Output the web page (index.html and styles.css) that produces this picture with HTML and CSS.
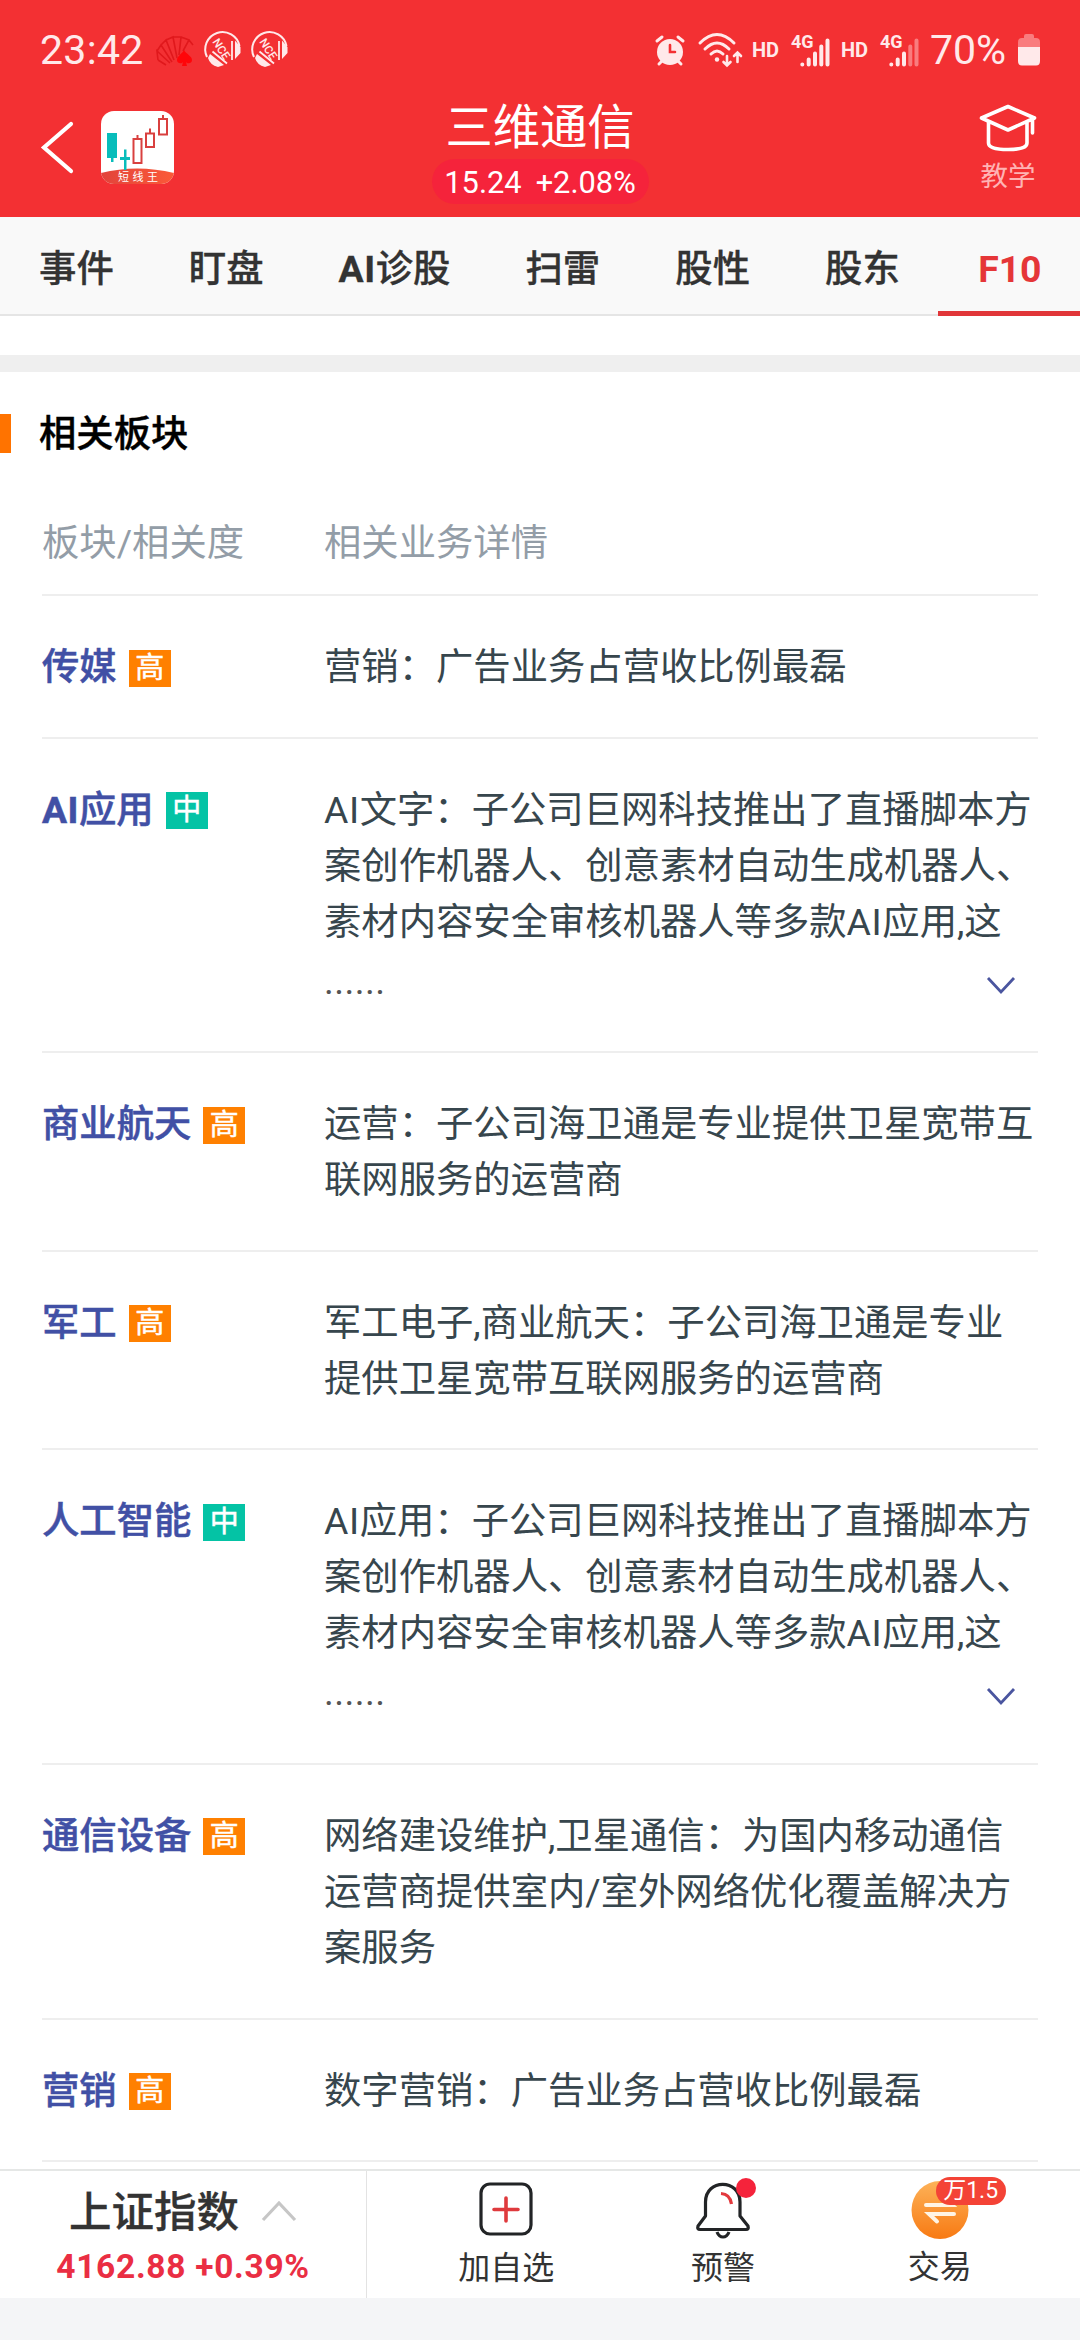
FILE: index.html
```html
<!DOCTYPE html>
<html lang="zh-CN">
<head>
<meta charset="utf-8">
<title>三维通信 F10</title>
<link rel="stylesheet" href="styles.css">
</head>
<body>
<div class="app">
  <header class="header">
    <div class="status">
      <div class="status-left">
        <span class="clock">23:42</span>
        <svg class="cards" width="38" height="32" viewBox="0 0 38 32" fill="none" stroke="#e0181c" stroke-width="1.6">
          <path d="M2 24 L1 15 L14 27 M1 15 L5 9 L16 26 M5 9 L10 4 L18 24 M10 4 L17 1 L21 22 M17 1 L25 1 L23 19 M25 1 L33 4 L27 15 M33 4 L37 9 M2 24 L10 29"/>
          <path d="M28 14 C26 18 21 20 21 24 C21 28 26 28 27 26 L26 30 H31 L30 26 C31 28 36 28 36 24 C36 20 30 18 28 14Z" fill="#ff0509" stroke="none"/>
        </svg>
        <svg class="nce" width="38" height="38" viewBox="0 0 38 38">
          <path d="M3 26 A17.300 17.300 0 1 1 35.500 15" fill="none" stroke="#ffe9ea" stroke-width="2"/>
          <path d="M31 9.500 L36.500 16 V22 L31 28Z M6 23 L20 34 L14 36 Q6 34 4 27Z" fill="#ffe9ea"/>
          <path d="M28 10V29 M8.500 20.500 L23 32.500" stroke="#ffe9ea" stroke-width="1.800"/>
          <text x="-10.500" y="4" transform="translate(17 17.500) rotate(57)" class="nce-text">NCE</text>
        </svg>
        <svg class="nce" width="38" height="38" viewBox="0 0 38 38">
          <path d="M3 26 A17.300 17.300 0 1 1 35.500 15" fill="none" stroke="#ffe9ea" stroke-width="2"/>
          <path d="M31 9.500 L36.500 16 V22 L31 28Z M6 23 L20 34 L14 36 Q6 34 4 27Z" fill="#ffe9ea"/>
          <path d="M28 10V29 M8.500 20.500 L23 32.500" stroke="#ffe9ea" stroke-width="1.800"/>
          <text x="-10.500" y="4" transform="translate(17 17.500) rotate(57)" class="nce-text">NCE</text>
        </svg>
      </div>
      <div class="status-right">
        <svg width="30" height="32" viewBox="0 0 30 32" fill="none" stroke="#ffe9ea" stroke-width="3" stroke-linecap="round">
          <circle cx="15" cy="18" r="13" fill="#ffe9ea" stroke="none"/>
          <path d="M2 7 L7 3 M28 7 L23 3 M4 30 L7 27 M26 30 L23 27"/>
          <path d="M15 11V18H20" stroke="#f33033" stroke-width="2.600"/>
        </svg>
        <svg class="wifi" width="46" height="36" viewBox="0 0 46 36" fill="none" stroke="#ffe9ea" stroke-width="3" stroke-linecap="round">
          <path d="M2 11 Q19 -6 36 11 M7 17 Q19 5 31 17 M13 22 Q19 16 25 22"/>
          <circle cx="19" cy="27.500" r="2.200" fill="#ffe9ea" stroke="none"/>
          <path d="M29 24V33 M25.500 30 L29 33.500 L32.500 30 M39.500 30V21 M36 24 L39.500 20.500 L43 24" stroke-width="2.600"/>
        </svg>
        <span class="hd">HD</span>
        <svg class="signal" width="40" height="36" viewBox="0 0 40 36" fill="none" stroke="#ffe9ea" stroke-width="4" stroke-linecap="round">
          <text x="0" y="14.500" class="net" stroke="none">4G</text>
          <path d="M11.300 31.500V31.600 M17.700 26.500V31.500 M24 20.500V31.500 M30.300 13.500V31.500 M36.500 7.500V31.500"/>
        </svg>
        <span class="hd">HD</span>
        <svg class="signal" width="40" height="36" viewBox="0 0 40 36" fill="none" stroke="#ffe9ea" stroke-width="4" stroke-linecap="round">
          <text x="0" y="14.500" class="net" stroke="none">4G</text>
          <path d="M11.300 31.500V31.600 M17.700 26.500V31.500 M24 20.500V31.500"/>
          <path d="M30.300 13.500V31.500 M36.500 7.500V31.500" stroke="#f97c7e"/>
        </svg>
        <span class="percent">70%</span>
        <svg width="22" height="32" viewBox="0 0 22 32">
          <path d="M6 4 V2 Q6 0 8 0 H14 Q16 0 16 2 V4 H18 Q22 4 22 8 V13 H0 V8 Q0 4 4 4Z" fill="#f97c7e"/>
          <path d="M0 13 H22 V27 Q22 31.500 18 31.500 H4 Q0 31.500 0 27Z" fill="#ffe9ea"/>
        </svg>
      </div>
    </div>
    <div class="nav">
      <div class="nav-left">
        <svg width="34" height="54" viewBox="0 0 34 54" fill="none" stroke="#fff" stroke-width="4.200" stroke-linecap="round"><path d="M31 4 L4 27.500 L31 51"/></svg>
        <svg class="logo" width="73" height="73" viewBox="0 0 73 73">
          <defs><clipPath id="logo-clip"><rect width="73" height="73" rx="13"/></clipPath>
          <linearGradient id="logo-base"><stop offset="0" stop-color="#e2433b"/><stop offset="1" stop-color="#fb5a38"/></linearGradient></defs>
          <g clip-path="url(#logo-clip)">
            <rect width="73" height="73" fill="#fff"/>
            <path d="M0 62 Q36 53 73 62 V73 H0Z" fill="url(#logo-base)"/>
            <path d="M6 22H16V47H12.500V51H10V47H6Z M19 46H23V38.500H25.500V46H29V49H25.500V59H23V49H19Z" fill="#08bdbb"/>
            <path d="M32.500 28H40.500V52H32.500Z M36.500 28V24 M45 22.500H53V36H45Z M49 22.500V17.500 M58 8H66V23.500H58Z M62 8V4" fill="none" stroke="#d9403f" stroke-width="2"/>
            <text x="17" y="69.500" class="logo-text">短线王</text>
          </g>
        </svg>
      </div>
      <div class="nav-title">
        <h1 class="name">三维通信</h1>
        <div class="quote"><span>15.24</span><span>+2.08%</span></div>
      </div>
      <div class="teach">
        <svg width="58" height="48" viewBox="0 0 58 48" fill="none" stroke="#fff" stroke-width="3.600" stroke-linejoin="round" stroke-linecap="round">
          <path d="M2.500 14 L29 2.500 L55.500 14 L29 26Z M9.500 18V39 Q9.500 45.500 29 45.500 Q48 45.500 48 39V18 M53.500 16V29" />
        </svg>
        <span>教学</span>
      </div>
    </div>
  </header>

  <nav class="tabs">
    <span class="tab">事件</span><span class="tab">盯盘</span><span class="tab"><b>AI</b>诊股</span><span class="tab">扫雷</span><span class="tab">股性</span><span class="tab">股东</span><span class="tab active">F10</span>
  </nav>

  <main class="content">
    <div class="band"></div>
    <h2 class="section">相关板块</h2>
    <div class="table">
      <div class="row head"><span>板块/相关度</span><span>相关业务详情</span></div>
      <div class="row"><div class="board">传媒<i class="tag high">高</i></div><p>营销：广告业务占营收比例最磊</p></div>
      <div class="row"><div class="board"><span><b>AI</b>应用</span><i class="tag mid">中</i></div>
        <div><p><span class="latin">AI</span>文字：子公司巨网科技推出了直播脚本方<br>案创作机器人、创意素材自动生成机器人、<br>素材内容安全审核机器人等多款<span class="latin">AI</span>应用,这</p>
          <div class="more"><span>......</span><svg width="30" height="20" viewBox="0 0 30 20"><path d="M2 2 L15 16 L28 2" fill="none" stroke="#4a559f" stroke-width="2.800"/></svg></div></div></div>
      <div class="row"><div class="board">商业航天<i class="tag high">高</i></div><p>运营：子公司海卫通是专业提供卫星宽带互<br>联网服务的运营商</p></div>
      <div class="row"><div class="board">军工<i class="tag high">高</i></div><p>军工电子,商业航天：子公司海卫通是专业<br>提供卫星宽带互联网服务的运营商</p></div>
      <div class="row"><div class="board">人工智能<i class="tag mid">中</i></div>
        <div><p><span class="latin">AI</span>应用：子公司巨网科技推出了直播脚本方<br>案创作机器人、创意素材自动生成机器人、<br>素材内容安全审核机器人等多款<span class="latin">AI</span>应用,这</p>
          <div class="more"><span>......</span><svg width="30" height="20" viewBox="0 0 30 20"><path d="M2 2 L15 16 L28 2" fill="none" stroke="#4a559f" stroke-width="2.800"/></svg></div></div></div>
      <div class="row"><div class="board">通信设备<i class="tag high">高</i></div><p>网络建设维护,卫星通信：为国内移动通信<br>运营商提供室内/室外网络优化覆盖解决方<br>案服务</p></div>
      <div class="row"><div class="board">营销<i class="tag high">高</i></div><p>数字营销：广告业务占营收比例最磊</p></div>
    </div>
  </main>

  <footer class="bottom">
    <div class="index">
      <div class="index-name">上证指数<svg width="36" height="24" viewBox="0 0 36 24"><path d="M2 21 L18 4 L34 21" fill="none" stroke="#c6c6c6" stroke-width="3.200"/></svg></div>
      <div class="index-value">4162.88 +0.39%</div>
    </div>
    <div class="actions">
      <div class="action">
        <svg width="56" height="60" viewBox="0 0 56 60" fill="none"><rect x="3" y="4" width="50" height="50" rx="9" stroke="#222426" stroke-width="3.200"/><path d="M28 18V41 M16 29.500H40" stroke="#df3a3d" stroke-width="3.600" stroke-linecap="round"/></svg>
        <span>加自选</span>
      </div>
      <div class="action">
        <svg width="60" height="60" viewBox="0 0 60 60" fill="none" stroke="#222426" stroke-width="3.200" stroke-linejoin="round"><path d="M12.500 36 V22 C12.500 -1.500 47 -1.500 47 22 V36 L55 46 Q56 49.500 53 49.500 H7 Q4 49.500 5 46Z M24 52 Q26 57 30 57 Q34 57 36 52"/><path d="M28 13.500 Q37 14 38.500 24" stroke="#e2393d"/><circle cx="53" cy="8" r="10" fill="#f5233b" stroke="none"/></svg>
        <span>预警</span>
      </div>
      <div class="action trade">
        <div class="trade-icon">
          <svg width="58" height="60" viewBox="0 0 58 60"><defs><linearGradient id="coin" x2="0" y2="1"><stop offset="0" stop-color="#fdb258"/><stop offset="1" stop-color="#f87a13"/></linearGradient></defs><ellipse cx="29" cy="30" rx="28.500" ry="29" fill="url(#coin)"/><path d="M15 25 H41 L33 18 M43 34 H18 L26 41.500" fill="none" stroke="#fff4e4" stroke-width="4" stroke-linecap="round"/></svg>
          <b class="rate">万1.5</b>
        </div>
        <span>交易</span>
      </div>
    </div>
  </footer>
</div>
</body>
</html>
```

FILE: styles.css
```css
* { box-sizing: border-box; }
body, h1, h2, p { margin: 0; }
body { background: #fff; font-family: Roboto, "Noto Sans CJK SC", sans-serif; }
b { font-weight: 700; }
svg { display: block; flex: none; overflow: visible; }
.app { width: 1080px; height: 2340px; display: flex; flex-direction: column; overflow: hidden; }

.header { height: 217px; flex: none; background: #f33033; color: #fff; }
.status { height: 100px; display: flex; justify-content: space-between; padding: 0 40px; color: #ffe9ea; }
.status-left, .status-right { display: flex; align-items: center; }
.clock { font-size: 41px; width: 116px; letter-spacing: .3px; }
.nce { margin-left: 9px; }
.cards + .nce { margin-left: 10px; }
.cards { margin-top: 4px; }
.nce-text { font-size: 11.500px; font-weight: 500; fill: #ffe9ea; }
.wifi { margin-left: 13px; }
.hd { width: 30px; margin-left: 8px; font-size: 20px; font-weight: 700; line-height: 36px; }
.signal { margin-left: 9px; margin-top: 2px; }
.signal + .hd { margin-left: 10px; }
.net { font-size: 18px; font-weight: 700; fill: #ffe9ea; }
.percent { width: 98px; padding-left: 10px; font-size: 41px; }

.nav { height: 117px; display: grid; grid-template-columns: 1fr auto 1fr; }
.nav-left { display: flex; padding: 11px 0 0 40px; gap: 27px; }
.nav-left svg:first-child { margin-top: 9px; }
.logo-text { font-size: 11px; letter-spacing: 3.500px; fill: #fff; }
.nav-title { display: flex; flex-direction: column; align-items: center; }
.name { height: 59px; line-height: 57px; font-size: 47.300px; font-weight: 400; }
.quote { width: 217px; height: 45px; border-radius: 23px; background: #f5233b; display: flex; justify-content: center; gap: 14px; font-size: 30.800px; line-height: 47px; }
.teach { justify-self: end; width: 58px; margin-right: 43px; padding-top: 4px; display: flex; flex-direction: column; align-items: center; font-size: 27.500px; line-height: 49px; color: #ffb3b4; white-space: nowrap; }

.tabs { height: 99px; flex: none; display: flex; gap: 75px; padding-left: 39px; background: #f9f9f9; border-bottom: 2px solid #e5e5e5; font-size: 37.400px; line-height: 104px; font-weight: 500; color: #333; white-space: nowrap; -webkit-text-stroke: .3px currentColor; }
.tab { flex: none; }
.tab b { letter-spacing: .5px; }
.tabs .active { width: 142px; height: 99px; margin-left: -37px; padding-left: 2px; text-align: center; color: #e53638; border-bottom: 5px solid #e13639; font-weight: 700; -webkit-text-stroke: 0; }

.content { height: 1853px; flex: none; overflow: hidden; padding-top: 39px; }
.band { height: 17px; background: #efefef; }
.section { margin-top: 42px; height: 39px; border-left: 11px solid #ff7300; padding-left: 28px; font-size: 37.330px; font-weight: 500; line-height: 41px; color: #000; -webkit-text-stroke: .4px currentColor; }
.table { margin: 33px 42px 0; font-size: 37.330px; line-height: 56px; color: #37464d; }
.row { display: grid; grid-template-columns: 282px 1fr; padding: 43px 0 41.600px; border-bottom: 2px solid #eee; white-space: nowrap; }
.head { height: 110px; padding: 29px 0 0; color: #939da7; }
.board { display: flex; align-items: center; height: 56px; gap: 12px; font-weight: 500; color: #4150a5; -webkit-text-stroke: .5px currentColor; }
.board b { letter-spacing: .5px; }
.latin { letter-spacing: .6px; }
.tag { width: 42px; height: 37px; margin-top: 2px; font-style: normal; font-weight: 400; font-size: 29px; line-height: 36px; text-align: center; color: #fff; }
.high { background: #ff8000; }
.mid { background: #04c3a5; }
.more { height: 60px; display: flex; justify-content: space-between; align-items: flex-start; padding-right: 22px; line-height: 62px; color: #555; letter-spacing: .4px; }
.more svg { margin-top: 26px; }

.bottom { height: 171px; flex: none; display: flex; background: #fff; border-top: 2px solid #e5e7e6; border-bottom: 42px solid #f4f5f7; color: #333; }
.index { width: 367px; flex: none; border-right: 1px solid #e3e3e3; display: flex; flex-direction: column; align-items: center; }
.index-name { display: flex; gap: 22px; font-size: 42.500px; font-weight: 500; line-height: 84px; height: 73px; -webkit-text-stroke: .3px currentColor; }
.index-name svg { margin-top: 28px; }
.index-value { font-size: 33.500px; font-weight: 700; letter-spacing: .7px; line-height: 46px; color: #ea2e43; white-space: pre; }
.actions { flex: 1; display: grid; grid-template-columns: repeat(3, 1fr); padding: 0 32px 0 31px; }
.action { display: flex; flex-direction: column; align-items: center; padding-top: 9px; font-size: 32px; line-height: 56px; }
.trade span { margin-top: -1px; }
.trade-icon { position: relative; }
.rate { position: absolute; left: 25px; top: -3px; width: 70px; height: 28px; border-radius: 14px; background: #f44336; color: #fff; font-size: 23px; font-weight: 400; line-height: 28px; text-align: center; }
```
